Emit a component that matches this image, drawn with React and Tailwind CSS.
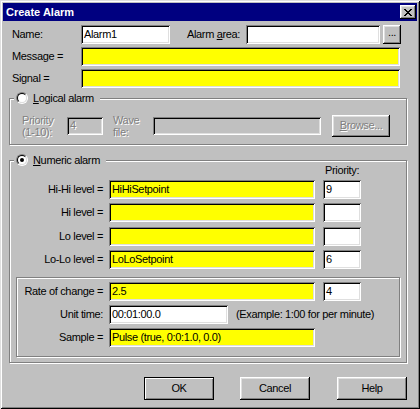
import clsx from "clsx";

const sunken =
  "shadow-[inset_1px_1px_0_0_#808080,inset_-1px_-1px_0_0_#ffffff,inset_2px_2px_0_0_#000000,inset_-2px_-2px_0_0_#dfdfdf]";
const raised =
  "shadow-[inset_-1px_-1px_0_0_#000000,inset_1px_1px_0_0_#ffffff,inset_-2px_-2px_0_0_#808080,inset_2px_2px_0_0_#dfdfdf]";
const etched = "border border-[#808080] shadow-[inset_1px_1px_0_0_#ffffff,1px_1px_0_0_#ffffff]";
const grayText = "text-[#808080] [text-shadow:1px_1px_0_#ffffff]";

function Field({ className, value, disabled }) {
  return (
    <div
      className={clsx(
        "flex items-center pl-[3px] whitespace-nowrap overflow-hidden",
        sunken,
        disabled && grayText,
        className
      )}
    >
      {value}
    </div>
  );
}

function Btn({ className, children, isDefault, disabled }) {
  return (
    <div
      className={clsx(
        "flex items-center justify-center whitespace-nowrap",
        isDefault
          ? "border border-black shadow-[inset_1px_1px_0_0_#ffffff,inset_-1px_-1px_0_0_#808080]"
          : raised,
        disabled && grayText,
        className
      )}
    >
      {children}
    </div>
  );
}

function Radio({ checked }) {
  return (
    <div className="w-[12px] h-[12px] rounded-full border border-t-[#808080] border-l-[#808080] border-r-white border-b-white flex">
      <div className="flex-1 rounded-full border border-t-black border-l-black border-r-[#dfdfdf] border-b-[#dfdfdf] bg-white flex items-center justify-center">
        {checked && <div className="w-[4px] h-[4px] rounded-full bg-black" />}
      </div>
    </div>
  );
}

function Legend({ checked, children }) {
  return (
    <div className="absolute left-[4px] top-[-7px] h-[12px] flex items-center gap-[5px] bg-[#c0c0c0] pl-[2px] pr-[6px]">
      <Radio checked={checked} />
      <span>{children}</span>
    </div>
  );
}

function CloseButton() {
  return (
    <div className={clsx("w-[16px] h-[14px] bg-[#c0c0c0] flex items-center justify-center", raised)}>
      <svg width="8" height="7" viewBox="0 0 8 7" shapeRendering="crispEdges">
        <path
          fill="#000"
          d="M0 0h2v1H0zM6 0h2v1H6zM1 1h2v1H1zM5 1h2v1H5zM2 2h4v1H2zM3 3h2v1H3zM2 4h4v1H2zM1 5h2v1H1zM5 5h2v1H5zM0 6h2v1H0zM6 6h2v1H6z"
        />
      </svg>
    </div>
  );
}

function LevelRow({ label, value, priority, className }) {
  return (
    <div className={clsx("h-[19px] flex items-center", className)}>
      <span className="w-[93px] text-right">{label}</span>
      <Field className="ml-[6px] w-[206px] h-[19px] bg-[#ffff00]" value={value} />
      <Field className="ml-[8px] w-[38px] h-[19px] bg-white" value={priority} />
    </div>
  );
}

export default function App() {
  return (
    <div
      className={
        "w-[420px] h-[409px] bg-[#c0c0c0] p-[3px] text-[11px] leading-[13px] tracking-[-0.35px] text-black font-['Liberation_Sans',Arial,sans-serif] " +
        "shadow-[inset_1px_1px_0_0_#dfdfdf,inset_-1px_-1px_0_0_#000000,inset_2px_2px_0_0_#ffffff,inset_-2px_-2px_0_0_#808080]"
      }
    >
      {/* title bar */}
      <div className="h-[18px] bg-[#000080] flex items-center justify-between pl-[3px] pr-[1px]">
        <span className="text-white font-bold tracking-normal">Create Alarm</span>
        <CloseButton />
      </div>

      <div className="flex flex-col pl-[6px]">
        <div className="mt-[4px] h-[19px] flex items-center">
          <span className="w-[72px] pl-[3px]">Name:</span>
          <Field className="w-[89px] h-[19px] bg-white" value="Alarm1" />
          <span className="ml-[17px] w-[59px]">
            Alarm <u>a</u>rea:
          </span>
          <Field className="w-[134px] h-[19px] bg-white" />
          <Btn className="ml-[3px] w-[18px] h-[19px] pb-[4px]">...</Btn>
        </div>
        <div className="mt-[3px] h-[19px] flex items-center">
          <span className="w-[72px] pl-[3px]">Message =</span>
          <Field className="w-[319px] h-[19px] bg-[#ffff00]" />
        </div>
        <div className="mt-[3px] h-[19px] flex items-center">
          <span className="w-[72px] pl-[3px]">Signal =</span>
          <Field className="w-[319px] h-[19px] bg-[#ffff00]" />
        </div>

        {/* logical alarm */}
        <div className={clsx("relative mt-[10px] w-[398px] h-[47px] flex items-center pt-[8px] pl-[12px]", etched)}>
          <Legend>
            <u>L</u>ogical alarm
          </Legend>
          <span className={clsx("w-[45px] leading-[12px]", grayText)}>
            Priority
            <br />
            (1-10):
          </span>
          <Field className="w-[36px] h-[18px]" value="4" disabled />
          <span className={clsx("ml-[10px] w-[40px] leading-[12px]", grayText)}>
            Wave
            <br />
            file:
          </span>
          <Field className="w-[168px] h-[18px]" disabled />
          <Btn className="ml-[11px] w-[58px] h-[22px]" disabled>
            <span>
              <u>B</u>rowse...
            </span>
          </Btn>
        </div>

        {/* numeric alarm */}
        <div className={clsx("relative mt-[15px] w-[398px] h-[203px] flex flex-col", etched)}>
          <Legend checked>
            <u>N</u>umeric alarm
          </Legend>
          <div className="mt-[2px] h-[14px] leading-[14px] pl-[315px]">Priority:</div>
          <LevelRow className="mt-[3px]" label="Hi-Hi level =" value="HiHiSetpoint" priority="9" />
          <LevelRow className="mt-[4px]" label="Hi level =" />
          <LevelRow className="mt-[5px]" label="Lo level =" />
          <LevelRow className="mt-[4px]" label="Lo-Lo level =" value="LoLoSetpoint" priority="6" />

          <div className={clsx("mt-[8px] ml-[6px] w-[384px] h-[80px] flex flex-col", etched)}>
            <div className="mt-[4px] h-[19px] flex items-center">
              <span className="w-[86px] text-right">Rate of change =</span>
              <Field className="ml-[6px] w-[206px] h-[19px] bg-[#ffff00]" value="2.5" />
              <Field className="ml-[8px] w-[38px] h-[19px] bg-white" value="4" />
            </div>
            <div className="mt-[4px] h-[19px] flex items-center">
              <span className="w-[86px] text-right">Unit time:</span>
              <Field className="ml-[6px] w-[119px] h-[19px] bg-white" value="00:01:00.0" />
              <span className="ml-[8px] whitespace-nowrap">(Example: 1:00 for per minute)</span>
            </div>
            <div className="mt-[4px] h-[19px] flex items-center">
              <span className="w-[86px] text-right">Sample =</span>
              <Field className="ml-[6px] w-[206px] h-[19px] bg-[#ffff00]" value="Pulse (true, 0:0:1.0, 0.0)" />
            </div>
          </div>
        </div>

        {/* buttons */}
        <div className="mt-[14px] flex pl-[135px]">
          <Btn isDefault className="w-[70px] h-[23px]">OK</Btn>
          <Btn className="ml-[26px] w-[70px] h-[23px]">Cancel</Btn>
          <Btn className="ml-[27px] w-[70px] h-[23px]">Help</Btn>
        </div>
      </div>
    </div>
  );
}
